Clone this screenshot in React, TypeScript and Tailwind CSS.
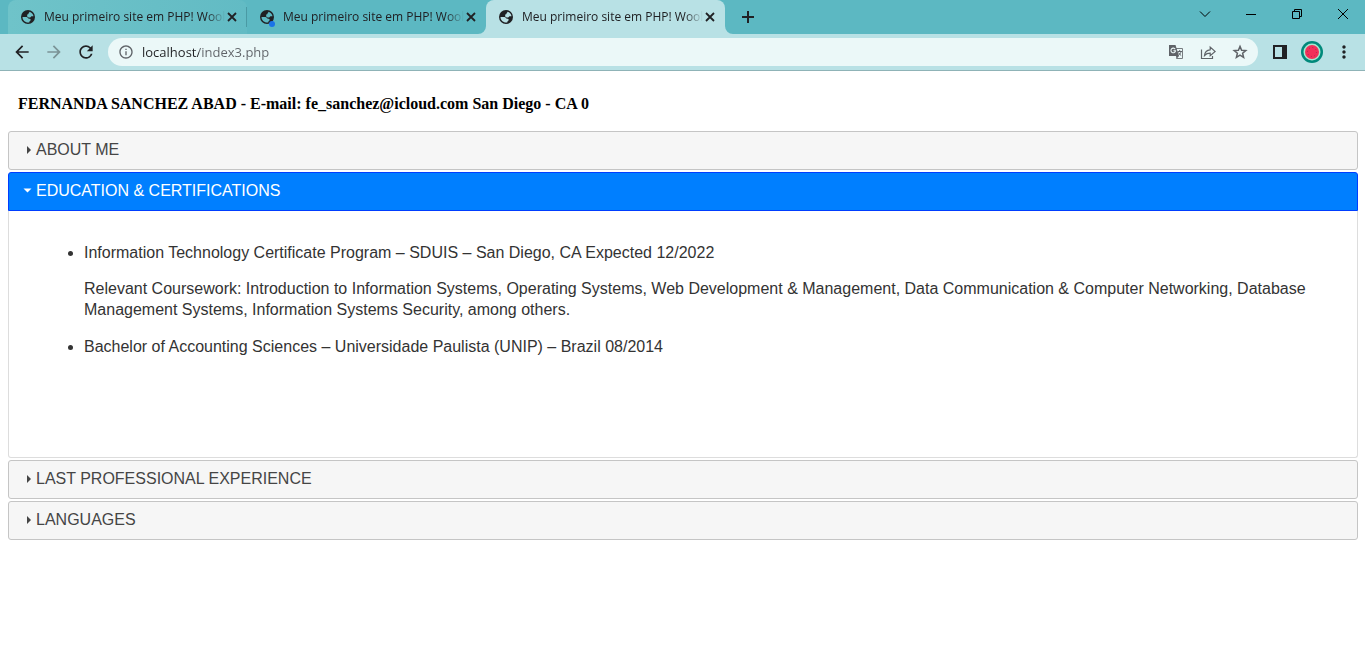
import { useState, type ReactNode } from "react";
import {
  MdArrowBack,
  MdArrowForward,
  MdInfoOutline,
  MdMoreVert,
  MdRefresh,
} from "react-icons/md";

const tabTitle = "Meu primeiro site em PHP! Wooh";

function Flare({ side }: { side: "left" | "right" }) {
  return (
    <svg
      aria-hidden="true"
      viewBox="0 0 8 8"
      className={`absolute bottom-0 h-2 w-2 text-[#b8e1e5] ${side === "left" ? "right-full" : "left-full"}`}
    >
      <path fill="currentColor" d={side === "left" ? "M8 0v8H0a8 8 0 0 0 8-8z" : "M0 0v8h8a8 8 0 0 1-8-8z"} />
    </svg>
  );
}

function Globe() {
  return (
    <svg aria-hidden="true" viewBox="0 0 16 16" className="size-4">
      <path
        fill="#202124"
        fillRule="evenodd"
        d="M8 1a7 7 0 1 0 0 14A7 7 0 0 0 8 1zM9.500 2.700C11.700 3.300 13.200 5 13.500 7.200h-1.700c-.6 0-.8.6-1.300 1-.8.5-2.600.2-3.100-.5-.4-.7.100-1.200-.5-1.900 1.100-.2 1.600-.7 1.600-1.300 0-.7.800-.5 1-1.800zM2.500 8h4c1.300 0 1.500 1.800 2.700 1.800.9 0 1.500.5 1.500 1.300 0 .9-1.500.8-1.500 2.300-3.700.6-6.700-1.900-6.700-5.400z"
      />
    </svg>
  );
}

function Tab({ state }: { state: "hover" | "idle" | "active" }) {
  const look =
    state === "active"
      ? "bg-[#b8e1e5]"
      : state === "hover"
        ? "bg-linear-to-r from-[#6fc3c9] to-[#62bbc4]"
        : "bg-transparent";
  return (
    <div className={`relative flex h-full w-[239px] items-center rounded-t-lg pr-[9px] pl-3 ${look}`}>
      {state === "active" && <Flare side="left" />}
      {state === "active" && <Flare side="right" />}
      <span className="relative shrink-0">
        <Globe />
        {state === "idle" && <span className="absolute right-0 -bottom-0.5 size-1.5 rounded-full bg-[#1a73e8]" />}
      </span>
      <button
        type="button"
        className="ml-2 w-[181px] shrink-0 mask-r-from-90% mask-r-to-100% text-left text-xs whitespace-nowrap text-[#202124]"
      >
        {tabTitle}
      </button>
      <button type="button" aria-label="Close tab" className="ml-auto grid size-3 shrink-0 place-items-center">
        <svg viewBox="0 0 8 8" className="size-2 overflow-visible" stroke="#202124" strokeWidth="1.8">
          <path d="M0 0l8 8M8 0L0 8" />
        </svg>
      </button>
      {state === "hover" && <span className="absolute right-0 h-5 w-px bg-[#4a9aa4]" />}
    </div>
  );
}

function WindowButton({ label, children }: { label: string; children: ReactNode }) {
  return (
    <button type="button" aria-label={label} className="grid h-7 w-[46px] place-items-center text-black">
      <svg viewBox="0 0 12 12" className="size-3" fill="none" stroke="currentColor">
        {children}
      </svg>
    </button>
  );
}

function Browser() {
  return (
    <header className="font-['Open_Sans','Noto_Sans',sans-serif] text-[#202124]">
      <div className="flex h-[34px] overflow-hidden bg-[#5cb8c2] pl-2">
        <Tab state="hover" />
        <Tab state="idle" />
        <Tab state="active" />
        <button type="button" aria-label="New tab" className="ml-2 grid w-[30px] place-items-center">
          <svg viewBox="0 0 12 12" className="size-3" stroke="currentColor" strokeWidth="2">
            <path d="M6 0v12M0 6h12" />
          </svg>
        </button>
        <div className="-mr-px ml-auto flex">
          <WindowButton label="Search tabs">
            <path d="M1 3.5l5 5 5-5" />
          </WindowButton>
          <WindowButton label="Minimize">
            <path d="M1 6.5h10" />
          </WindowButton>
          <WindowButton label="Restore">
            <path d="M1.5 3.5h7v7h-7zM3.5 3.5v-2h7v7h-2" />
          </WindowButton>
          <WindowButton label="Close">
            <path d="M1 1l10 10M11 1L1 11" />
          </WindowButton>
        </div>
      </div>
      <div className="flex h-[37px] items-center border-b border-[#8fb3b7] bg-[#b8e1e5] pr-[5px] pl-1.5">
        <button type="button" aria-label="Back" className="grid size-8 place-items-center">
          <MdArrowBack className="size-5" />
        </button>
        <button type="button" aria-label="Forward" className="grid size-8 place-items-center text-[#7b9396]">
          <MdArrowForward className="size-5" />
        </button>
        <button type="button" aria-label="Reload" className="grid size-8 place-items-center">
          <MdRefresh className="size-5" />
        </button>
        <div className="ml-1.5 flex h-7 flex-1 items-center rounded-full bg-[#ebf8f8] px-2.5 text-[#5f6368]">
          <MdInfoOutline className="size-4" />
          <input
            aria-label="Address"
            className="ml-2 flex-1 bg-linear-to-r from-[#202124] from-[57px] to-[#5f6368] to-[57px] bg-clip-text text-[13px] leading-5 text-transparent caret-[#202124] outline-none"
            defaultValue="localhost/index3.php"
          />
          <div className="flex gap-4">
            <button type="button" aria-label="Translate this page">
              <svg viewBox="0 0 16 16" className="size-4" fill="none">
                <path d="M8 4.500h6.500v10H8.500" stroke="#777c80" />
                <path d="M1 1h6.500l3.500 11H1z" fill="#5f6368" />
                <path d="M8 12h3l-2.500 3z" fill="#5f6368" />
                <path d="M7.200 5.200a2.300 2.300 0 1 0 .3 1.600H5.400" stroke="#ebf8f8" strokeWidth="1.100" />
                <path d="M9.500 7.500H14M11.700 6v1.500M13 7.500c-.3 1.800-1.200 2.800-2.500 3.800M10.500 8.500c.6 1.300 1.500 2.200 2.700 3" stroke="#5f6368" />
              </svg>
            </button>
            <button type="button" aria-label="Share this page">
              <svg viewBox="0 0 16 16" className="size-4" fill="none" stroke="currentColor" strokeWidth="1.2">
                <path d="M1.500 5.500v9h11v-2.500M4.500 11.500c.3-3.500 2.200-5.500 5.700-5.700V3l5 4.500-5 4.300V9.200c-2.500 0-4.200.7-5.700 2.300z" />
              </svg>
            </button>
            <button type="button" aria-label="Bookmark this page">
              <svg viewBox="0 0 16 16" className="size-4" fill="none" stroke="currentColor" strokeWidth="1.5">
                <path d="M8 2.400l1.600 3.900 4.200.3-3.200 2.700 1 4.100L8 11.200l-3.600 2.200 1-4.100-3.200-2.700 4.200-.3z" />
              </svg>
            </button>
          </div>
        </div>
        <button type="button" aria-label="Side panel" className="ml-1.5 grid size-8 place-items-center">
          <svg viewBox="0 0 14 14" className="size-3.5">
            <path fill="currentColor" fillRule="evenodd" d="M0 0h14v14H0zM2 2v10h7V2z" />
          </svg>
        </button>
        <button type="button" aria-label="Profile" className="grid size-8 place-items-center">
          <svg viewBox="0 0 22 22" className="size-[22px]">
            <circle cx="11" cy="11" r="11" fill="#00897b" />
            <circle cx="11" cy="11" r="8.500" fill="#a7e8cf" />
            <circle cx="11" cy="11" r="7" fill="#f22f59" />
            <circle cx="11" cy="11" r="4.500" fill="none" stroke="#a32a4e" strokeDasharray="1 2.500" />
          </svg>
        </button>
        <button type="button" aria-label="Menu" className="grid size-8 place-items-center">
          <MdMoreVert className="size-5" />
        </button>
      </div>
    </header>
  );
}

const sections: { title: string; body: ReactNode }[] = [
  { title: "ABOUT ME", body: null },
  {
    title: "EDUCATION & CERTIFICATIONS",
    body: (
      <ul className="list-disc space-y-4 pl-10">
        <li>
          <p>Information Technology Certificate Program – SDUIS – San Diego, CA Expected 12/2022</p>
          <p className="mt-[15px]">
            Relevant Coursework: Introduction to Information Systems, Operating Systems, Web Development &amp;
            Management, Data Communication &amp; Computer Networking, Database Management Systems, Information Systems
            Security, among others.
          </p>
        </li>
        <li>Bachelor of Accounting Sciences – Universidade Paulista (UNIP) – Brazil 08/2014</li>
      </ul>
    ),
  },
  { title: "LAST PROFESSIONAL EXPERIENCE", body: null },
  { title: "LANGUAGES", body: null },
];

export default function App() {
  const [open, setOpen] = useState(1);
  return (
    <div className="min-h-screen bg-white">
      <Browser />
      <main className="pr-[7px] pl-2">
        <h1 className="px-2.5 pt-[22px] pb-[17px] font-['Liberation_Serif',serif] text-base leading-[21px] font-bold text-black">
          FERNANDA SANCHEZ ABAD - E-mail: fe_sanchez@icloud.com San Diego - CA 0
        </h1>
        <div className="flex flex-col gap-0.5 font-['Liberation_Sans',sans-serif] text-base leading-[21px] text-[#333333]">
          {sections.map((section, index) => {
            const active = index === open;
            return (
              <section key={section.title}>
                <h2>
                  <button
                    type="button"
                    aria-expanded={active}
                    onClick={() => setOpen(index)}
                    className={`flex w-full items-center border pt-[7px] pb-[9px] pl-3 text-left ${
                      active
                        ? "rounded-t-[3px] border-[#003eff] bg-[#007fff] text-white"
                        : "rounded-[3px] border-[#c5c5c5] bg-[#f6f6f6] text-[#454545]"
                    }`}
                  >
                    <svg viewBox="0 0 15 16" className="h-4 w-[15px] shrink-0" fill="currentColor" aria-hidden="true">
                      <path d={active ? "M2.500 5.500h8l-4 4z" : "M6 4l4 4-4 4z"} />
                    </svg>
                    {section.title}
                  </button>
                </h2>
                {active && (
                  <div className="min-h-[247px] rounded-b-[3px] border border-t-0 border-[#dddddd] px-[35px] py-[31px]">
                    {section.body}
                  </div>
                )}
              </section>
            );
          })}
        </div>
      </main>
    </div>
  );
}
